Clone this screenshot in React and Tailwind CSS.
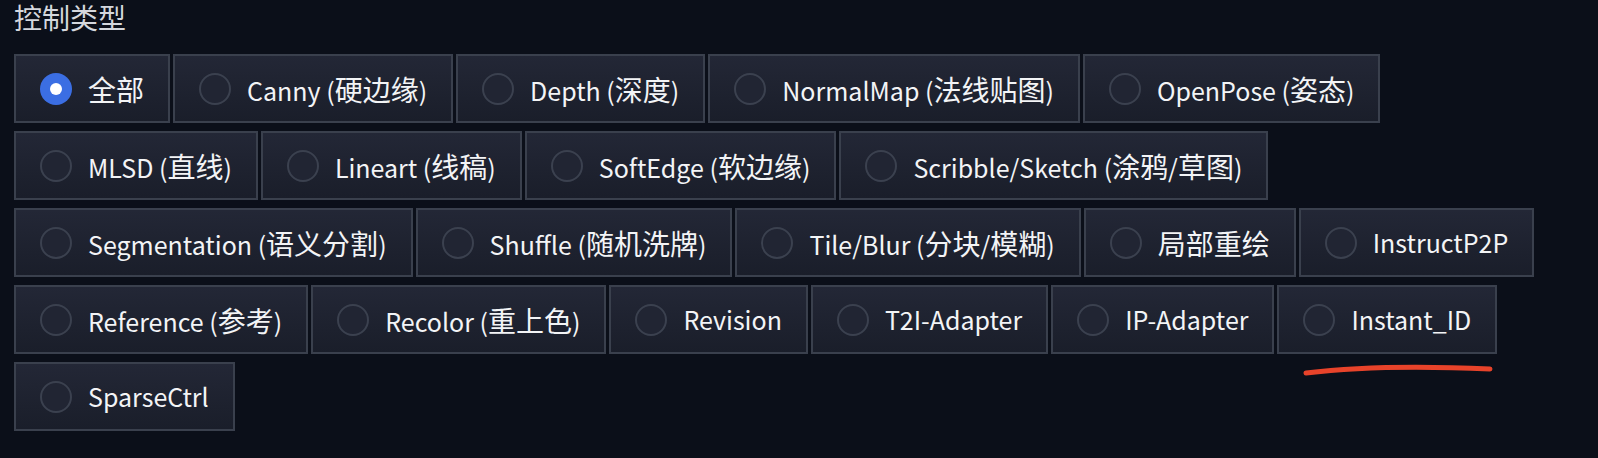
import React from "react";

const options = [
  "全部",
  "Canny (硬边缘)",
  "Depth (深度)",
  "NormalMap (法线贴图)",
  "OpenPose (姿态)",
  "MLSD (直线)",
  "Lineart (线稿)",
  "SoftEdge (软边缘)",
  "Scribble/Sketch (涂鸦/草图)",
  "Segmentation (语义分割)",
  "Shuffle (随机洗牌)",
  "Tile/Blur (分块/模糊)",
  "局部重绘",
  "InstructP2P",
  "Reference (参考)",
  "Recolor (重上色)",
  "Revision",
  "T2I-Adapter",
  "IP-Adapter",
  "Instant_ID",
  "SparseCtrl",
];

function splitRuns(text) {
  const runs = [];
  const re = /([\u4e00-\u9fff]+)|([^\u4e00-\u9fff]+)/g;
  let m;
  while ((m = re.exec(text))) {
    runs.push({ cjk: !!m[1], t: m[0] });
  }
  return runs;
}

function Label({ text }) {
  return (
    <span className="whitespace-nowrap">
      {splitRuns(text).map((r, i) =>
        r.cjk ? (
          <span key={i} className="text-[28px]">
            {r.t}
          </span>
        ) : (
          <span key={i} className="text-[25px]">
            {r.t}
          </span>
        )
      )}
    </span>
  );
}

function Radio({ checked }) {
  if (checked) {
    return (
      <span className="flex h-8 w-8 shrink-0 items-center justify-center rounded-full bg-[#3b6ee3]">
        <span className="h-[12px] w-[12px] rounded-full bg-white" />
      </span>
    );
  }
  return (
    <span className="h-8 w-8 shrink-0 rounded-full border-2 border-[#3b414f] bg-[#212533]" />
  );
}

export default function App() {
  return (
    <div className="relative min-h-screen w-full bg-[#0b0f19] px-[14px] font-['Noto_Sans_CJK_SC',sans-serif]">
      <div className="text-[28px] leading-[34px] text-[#d4d7dd]">控制类型</div>
      <div className="mt-[20px] flex flex-wrap gap-x-[3px] gap-y-[8px]">
        {options.map((o, i) => (
          <label
            key={o}
            className="flex h-[69px] items-center gap-[16px] border-2 border-[#3a404d] bg-gradient-to-b from-[#232736] to-[#1a1e2a] px-[24px] leading-none font-normal text-[#f3f4f6]"
          >
            <Radio checked={i === 0} />
            <Label text={o} />
          </label>
        ))}
      </div>
      <svg
        className="absolute left-[1300px] top-[362px]"
        width="200"
        height="20"
        viewBox="0 0 200 20"
        fill="none"
      >
        <path
          d="M6 11 Q80 2 190 7"
          stroke="#e8432a"
          strokeWidth="5"
          strokeLinecap="round"
        />
      </svg>
    </div>
  );
}
